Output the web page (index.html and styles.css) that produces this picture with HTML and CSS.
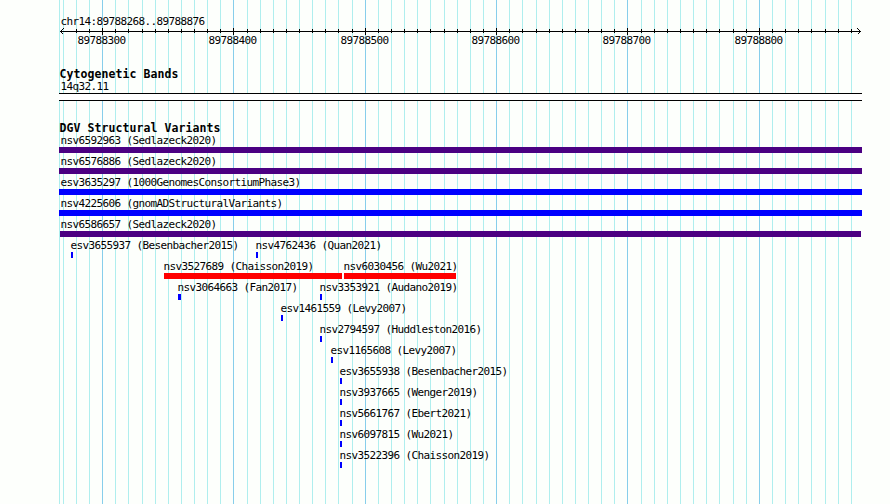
FILE: index.html
```
<!DOCTYPE html>
<html lang="en">
<head>
<meta charset="utf-8">
<title>chr14:89788268..89788876</title>
<link rel="stylesheet" href="styles.css">
</head>
<body>
<main class="browser">
  <svg class="grid" width="890" height="504" shape-rendering="crispEdges" aria-hidden="true"></svg>
  <header class="region">chr14:89788268..89788876</header>
  <svg class="ruler" width="890" height="8" shape-rendering="crispEdges" aria-hidden="true"></svg>
  <div class="scale"></div>
  <section class="cyto">
    <h2>Cytogenetic Bands</h2>
    <p>14q32.11</p>
    <div class="band"></div>
  </section>
  <section class="variants">
    <h2>DGV Structural Variants</h2>
    <div class="rows"></div>
  </section>
</main>
<script src="main.js"></script>
</body>
</html>
```
FILE: styles.css
```
body {
  margin: 0;
  background: #fdfffc;
  color: #000;
  font: 11px/13px "DejaVu Sans Mono", monospace;
  letter-spacing: -0.622px;
  white-space: nowrap;
}
.browser {
  display: grid;
  grid-template-columns: 890px;
  grid-template-rows: 15px 13px 8px 30px 54px 384px;
  height: 504px;
  overflow: hidden;
}
.grid { grid-area: 1 / 1 / -1 / 2; }
.region { grid-area: 2 / 1; padding-left: 60.4px; }
.ruler { grid-area: 3 / 1; display: block; }
.scale { grid-area: 4 / 1; display: grid; margin-top: -2px; align-content: start; }
.scale span { grid-area: 1 / 1; margin-left: var(--x); }
.cyto { grid-area: 5 / 1; padding-top: 3px; }
.variants { grid-area: 6 / 1; padding-top: 3px; }
h2 {
  margin: 0 0 0 59.4px;
  font-size: 11.5px;
  line-height: 11px;
  font-weight: 700;
  letter-spacing: 0.077px;
}
p { margin: 0 0 0 60.4px; }
.band {
  width: 803px;
  height: 6px;
  margin-left: 59px;
  border: solid #000;
  border-width: 1px 0;
  background: #fff;
}
.row { display: grid; height: 21px; align-content: start; }
.feature { grid-area: 1 / 1; margin-left: var(--x); }
.name { display: block; margin-left: -0.5px; }
.wide .name { margin-left: calc(60.5px - var(--x)); }
.bar { width: var(--w); height: 6px; background: var(--c); }
```
FILE: main.js
```
const minor = [59, 63, 76, 89, 115, 128, 142, 155, 168, 181, 194, 207, 220, 247, 260, 273, 286, 299, 312, 325, 338, 352, 378, 391, 404, 417, 430, 444, 457, 470, 483, 509, 522, 536, 549, 562, 575, 588, 601, 614, 641, 654, 667, 680, 693, 706, 719, 733, 746, 772, 785, 798, 811, 825, 838, 851];
const major = [102, 233, 365, 496, 627, 759];
const rect = (x, y, h, c) => `<rect x="${x}" y="${y}" width="1" height="${h}" fill="${c}"/>`;

document.querySelector('.grid').innerHTML =
  minor.map(x => rect(x, 0, 504, '#afeeee')).join('') +
  major.map(x => rect(x, 0, 504, '#87ceeb')).join('');

document.querySelector('.ruler').innerHTML =
  '<rect x="60" y="3" width="801" height="1"/>' +
  minor.slice(2).map(x => rect(x, 1, 4, '#000')).join('') +
  major.map(x => rect(x, 0, 7, '#000')).join('') +
  '<path fill="none" stroke="#000" d="M63.5 .5L60.5 3.5L63.5 6.5M857.5 .5L860.5 3.5L857.5 6.5"/>';

document.querySelector('.scale').innerHTML =
  [77.5, 208.5, 340.5, 471.5, 602.5, 734.5].map((x, i) => `<span style="--x:${x}px">${89788300 + i * 100}</span>`).join('');

const purple = '#4b0082', blue = '#00f', red = '#f00';
const rows = [
  [[59, 803, purple, 'nsv6592963 (Sedlazeck2020)']],
  [[59, 803, purple, 'nsv6576886 (Sedlazeck2020)']],
  [[59, 803, blue, 'esv3635297 (1000GenomesConsortiumPhase3)']],
  [[59, 803, blue, 'nsv4225606 (gnomADStructuralVariants)']],
  [[60, 801, purple, 'nsv6586657 (Sedlazeck2020)']],
  [[71, 2, blue, 'esv3655937 (Besenbacher2015)'], [256, 2, blue, 'nsv4762436 (Quan2021)']],
  [[164, 178, red, 'nsv3527689 (Chaisson2019)'], [344, 112, red, 'nsv6030456 (Wu2021)']],
  [[178, 3, blue, 'nsv3064663 (Fan2017)'], [320, 2, blue, 'nsv3353921 (Audano2019)']],
  [[281, 2, blue, 'esv1461559 (Levy2007)']],
  [[320, 2, blue, 'nsv2794597 (Huddleston2016)']],
  [[331, 2, blue, 'esv1165608 (Levy2007)']],
  [[340, 2, blue, 'esv3655938 (Besenbacher2015)']],
  [[340, 2, blue, 'nsv3937665 (Wenger2019)']],
  [[340, 2, blue, 'nsv5661767 (Ebert2021)']],
  [[340, 2, blue, 'nsv6097815 (Wu2021)']],
  [[340, 2, blue, 'nsv3522396 (Chaisson2019)']]
];
document.querySelector('.rows').innerHTML = rows.map(r => '<div class="row">' + r.map(([x, w, c, t]) =>
  `<div class="feature${w > 800 ? ' wide' : ''}" style="--x:${x}px;--w:${w}px;--c:${c}"><span class="name">${t}</span><div class="bar"></div></div>`
).join('') + '</div>').join('');
```
